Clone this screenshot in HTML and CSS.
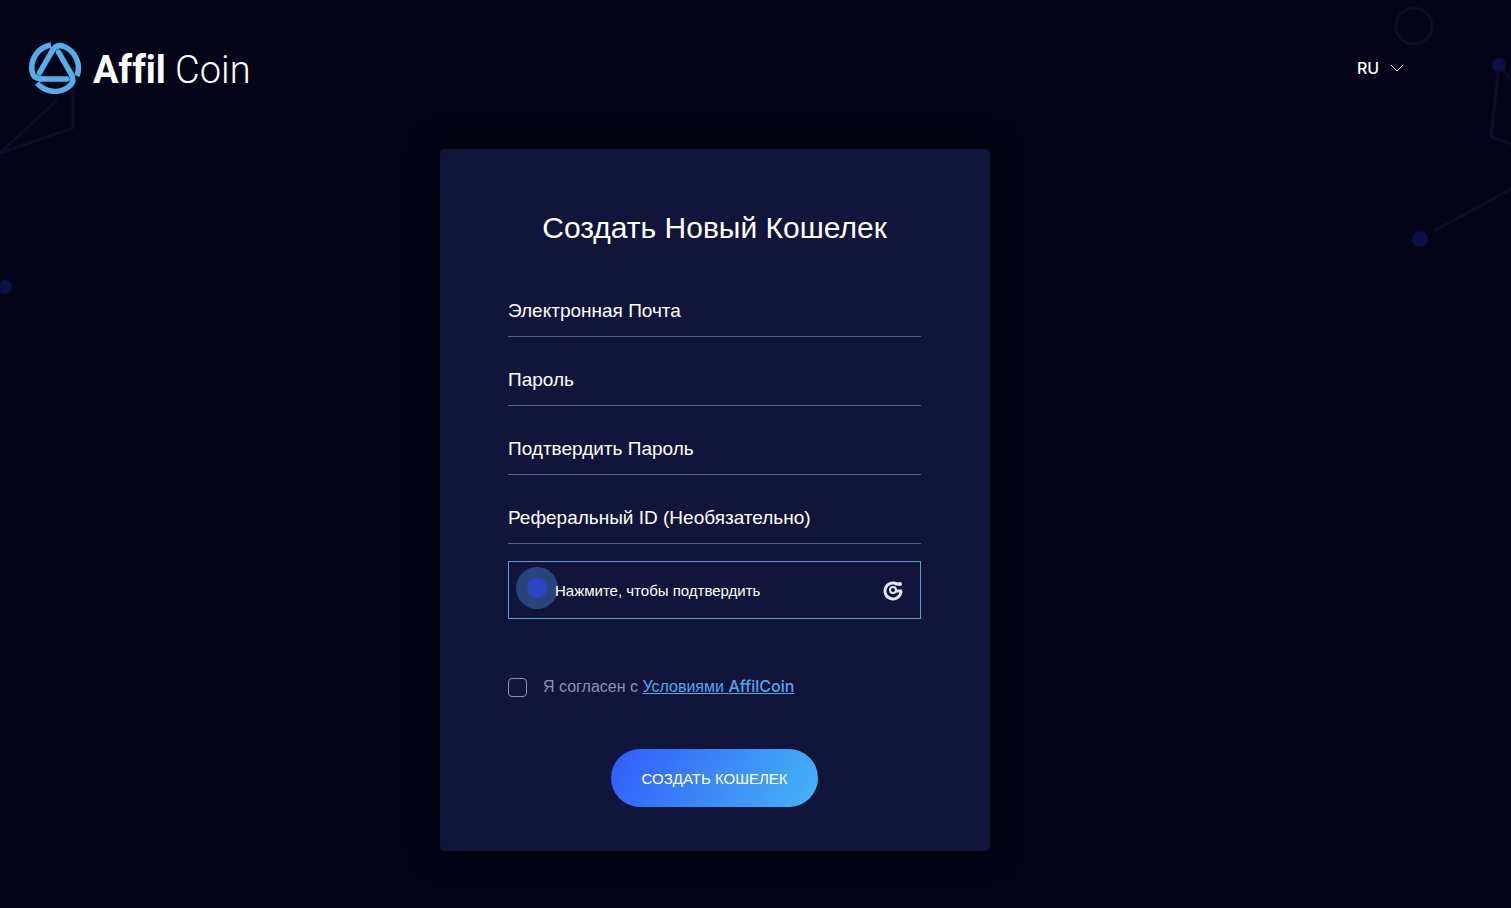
FILE: index.html
```html
<!DOCTYPE html>
<html lang="ru">
<head>
<meta charset="utf-8">
<meta name="viewport" content="width=device-width, initial-scale=1">
<title>Affil Coin</title>
<link rel="stylesheet" href="styles.css">
</head>
<body>

<svg class="net net-left" width="80" height="300" viewBox="0 0 80 300" aria-hidden="true">
  <path d="M73 90V128L0 153L57 100"/>
  <circle class="dot" cx="5" cy="287" r="7"/>
</svg>
<svg class="net net-right" width="131" height="260" viewBox="0 0 131 260" aria-hidden="true">
  <circle cx="34" cy="26" r="18"/>
  <path d="M131 80L119 65L111 137L131 144M54 231L131 189"/>
  <circle class="dot" cx="119" cy="65" r="7"/>
  <circle class="dot" cx="40" cy="239" r="8"/>
</svg>

<header class="header">
  <a class="logo" href="#">
    <svg width="54" height="52" viewBox="0 0 54 52" aria-hidden="true">
      <defs>
        <g id="arm">
          <path d="M39 37H13" stroke-linecap="round"/>
          <path d="M14 37Q5 37 4 29A23 23 0 0 1 23 3"/>
        </g>
      </defs>
      <g fill="none" stroke="#55aeec" stroke-width="5.500">
        <use href="#arm"/>
        <use href="#arm" transform="rotate(120 27 26)"/>
        <use href="#arm" transform="rotate(240 27 26)"/>
      </g>
    </svg>
    <span class="logo-text"><b>Affil</b> Coin</span>
  </a>
  <div class="lang">
    <select class="lang-select" aria-label="Язык">
      <option>RU</option>
      <option>EN</option>
    </select>
    <svg class="lang-arrow" width="14" height="8" viewBox="0 0 14 8" aria-hidden="true"><path d="M1 1L7 7L13 1" fill="none" stroke="#fff"/></svg>
  </div>
</header>

<main class="main">
  <form class="card">
    <h1 class="title">Создать Новый Кошелек</h1>

    <div class="field">
      <label for="email">Электронная Почта</label>
      <input id="email" type="email">
    </div>
    <div class="field">
      <label for="password">Пароль</label>
      <input id="password" type="password">
    </div>
    <div class="field">
      <label for="confirm">Подтвердить Пароль</label>
      <input id="confirm" type="password">
    </div>
    <div class="field">
      <label for="referral">Реферальный ID (Необязательно)</label>
      <input id="referral" type="text">
    </div>

    <button class="captcha" type="button">
      <span class="captcha-ring"></span>
      <span class="captcha-text">Нажмите, чтобы подтвердить</span>
      <svg width="22" height="22" viewBox="0 0 22 22" fill="none" stroke="#e4e5f5" aria-hidden="true">
        <path stroke-width="3" d="M15 5A8 8 0 1 0 19 12"/>
        <circle cx="11" cy="11" r="3" stroke-width="2"/>
        <path stroke-width="3" d="M13 12H20M13 5H18"/>
        <circle cx="18" cy="5" r="2" fill="#e4e5f5" stroke="none"/>
      </svg>
    </button>

    <div class="terms">
      <input id="terms" type="checkbox">
      <label for="terms">Я согласен с <a href="#">Условиями <span class="latin">AffilCoin</span></a></label>
    </div>

    <button class="submit" type="submit">СОЗДАТЬ КОШЕЛЕК</button>
  </form>
</main>

</body>
</html>
```
FILE: styles.css
```css
* { box-sizing: border-box; }
body { margin: 0; min-height: 100vh; position: relative; overflow-x: hidden; background: #030418; color: #fff; font-family: "Liberation Sans", Arial, sans-serif; }
input, button, select { font-family: inherit; color: inherit; }

/* background network */
.net { position: absolute; top: 0; z-index: -1; fill: none; stroke: #0c0e29; stroke-width: 3; }
.net .dot { fill: #0c1042; stroke: none; }
.net-left { left: 0; }
.net-right { right: 0; }

.header { display: flex; justify-content: space-between; align-items: center; padding: 42px 107px 0 28px; }
.logo { display: flex; align-items: center; gap: 11px; color: #fff; text-decoration: none; }
.logo-text { padding-top: 4px; font: 300 38px/48px Roboto, sans-serif; font-variant-ligatures: none; }
.logo-text b { font-weight: 700; }

.lang { display: grid; align-items: center; width: 47px; }
.lang-select, .lang-arrow { grid-area: 1 / 1; }
.lang-select { appearance: none; width: 100%; padding: 0; border: none; background: none; font: 500 16px/24px Inter, sans-serif; cursor: pointer; }
.lang-select option { background: #12153a; }
.lang-arrow { justify-self: end; pointer-events: none; }

.main { display: flex; justify-content: center; padding: 55px 81px 57px 0; }
.card { display: flex; flex-direction: column; width: 100%; max-width: 550px; padding: 59px 69px 44px 68px; border-radius: 5px; background: #12153a; box-shadow: 0 0 32px #000308; }
.title { margin: 0 0 37px; font-size: 30px; font-weight: 400; line-height: 40px; text-align: center; }

.field { display: grid; margin-bottom: 17px; }
.field label, .field input { grid-area: 1 / 1; }
.field label { font-size: 19px; line-height: 52px; }
.field input { width: 100%; height: 52px; padding: 0; border: none; border-bottom: 1px solid #555d87; background: none; font-size: 19px; outline: none; }

.captcha { display: flex; align-items: center; height: 58px; padding: 0 16px 0 7px; border: 1px solid #5d9bd3; background: none; cursor: pointer; }
.captcha-ring { width: 42px; height: 42px; margin-bottom: 4px; border-radius: 50%; background: radial-gradient(circle, #2b46c4 9px, #27457a 11px); }
.captcha-text { flex: 1; margin-left: -3px; font-size: 15px; text-align: left; }

.terms { display: flex; align-items: center; gap: 16px; margin: 56px 0 50px; color: #8f91ae; font-size: 16px; line-height: 24px; }
.terms input { appearance: none; width: 19px; height: 19px; margin: 0; border: 1px solid #8f91ae; border-radius: 4px; }
.terms input:checked { background: #48a9ef; }
.terms a { color: #55a5f0; }
.latin { font-family: Inter, sans-serif; font-weight: 500; line-height: 16px; }

.submit { align-self: center; height: 58px; padding: 0 31px; border: none; border-radius: 29px; background: linear-gradient(120deg, #315bfa, #45b5f5); font-size: 15px; cursor: pointer; }
```
